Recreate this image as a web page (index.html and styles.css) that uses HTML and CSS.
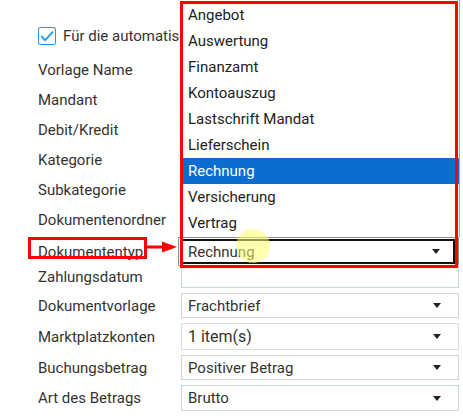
FILE: index.html
```html
<!DOCTYPE html>
<html lang="de">
<head>
<meta charset="utf-8">
<title>Vorlage</title>
<link rel="stylesheet" href="styles.css">
</head>
<body>
<div class="page">
  <div class="form">
    <div class="check-row">
      <span class="checkbox">
        <svg width="18" height="18" viewBox="0 0 18 18"><path d="M3.2 9.2 L7.2 13.2 L15 4.6" fill="none" stroke="#2196f3" stroke-width="1.8"/></svg>
      </span>
      <span class="check-label">Für die automatische Verarbeitung verwenden</span>
    </div>
    <div class="group upper">
      <div class="row"><span class="label">Vorlage Name</span><div class="field"></div></div>
      <div class="row"><span class="label">Mandant</span><div class="field"></div></div>
      <div class="row"><span class="label">Debit/Kredit</span><div class="field"></div></div>
      <div class="row"><span class="label">Kategorie</span><div class="field"></div></div>
      <div class="row"><span class="label">Subkategorie</span><div class="field"></div></div>
      <div class="row"><span class="label">Dokumentenordner</span><div class="field"></div></div>
      <div class="row"><span class="label">Dokumententyp</span>
        <div class="active">
          <div class="active-inner"><span class="value">Rechnung</span><span class="caret"></span></div>
        </div>
      </div>
    </div>
    <div class="group lower">
      <div class="row row-date"><span class="label">Zahlungsdatum</span><div class="field f23"></div></div>
      <div class="row"><span class="label">Dokumentvorlage</span><div class="field f25"><span class="value">Frachtbrief</span><span class="caret"></span></div></div>
      <div class="row"><span class="label">Marktplatzkonten</span><div class="field f27 grey"><span class="value big">1 item(s)</span><span class="caret"></span></div></div>
      <div class="row"><span class="label">Buchungsbetrag</span><div class="field f25"><span class="value">Positiver Betrag</span><span class="caret"></span></div></div>
      <div class="row"><span class="label">Art des Betrags</span><div class="field f26"><span class="value">Brutto</span><span class="caret"></span></div></div>
    </div>
  </div>

  <ul class="listbox">
    <li>Angebot</li>
    <li>Auswertung</li>
    <li>Finanzamt</li>
    <li>Kontoauszug</li>
    <li>Lastschrift Mandat</li>
    <li>Lieferschein</li>
    <li class="selected">Rechnung</li>
    <li>Versicherung</li>
    <li>Vertrag</li>
  </ul>

  <div class="annot-list"></div>
  <div class="annot-label"></div>
  <svg class="annot-arrow" width="32" height="14" viewBox="0 0 32 14"><rect x="0" y="5.5" width="17" height="3" fill="#f00"/><polygon points="15,1.5 30,7 15,12.5" fill="#f00"/></svg>
  <div class="cursor"></div>
</div>
</body>
</html>
```

FILE: styles.css
```css
* { box-sizing: border-box; }
html, body { margin: 0; padding: 0; background: #fff; }
body { font-family: Roboto, "Noto Sans", "Liberation Sans", sans-serif; color: #333; }

.page {
  position: relative;
  width: 463px;
  height: 420px;
  overflow: hidden;
}

.form {
  display: flex;
  flex-direction: column;
  padding: 27px 0 0 38px;
}

.check-row {
  display: flex;
  align-items: center;
  height: 18px;
  margin-bottom: 12px;
  gap: 7px;
  font-size: 15px;
  white-space: nowrap;
}
.checkbox {
  width: 18px;
  height: 18px;
  border: 1.5px solid #2196f3;
  border-radius: 2px;
  display: flex;
  align-items: center;
  justify-content: center;
  flex: none;
}
.checkbox svg { display: block; margin: -1.5px; }

.group { display: flex; flex-direction: column; }
.upper { gap: 4px; }
.lower { gap: 5px; margin-top: 2px; }

.row {
  display: grid;
  grid-template-columns: 143px 278px;
  align-items: center;
  min-height: 26px;
}
.upper .row { height: 26px; }
.lower .row { min-height: 0; }

.label {
  font-size: 15px;
  color: #333;
  white-space: nowrap;
}

.field {
  height: 26px;
  border: 1px solid #c8d6dd;
  background: #fff;
  display: flex;
  align-items: center;
  justify-content: space-between;
  padding: 0 17px 0 6px;
}
.f23 { height: 23px; }
.f25 { height: 25px; }
.f26 { height: 26px; }
.f27 { height: 27px; }
.grey { border-color: #dcdcdc; }

.value { font-size: 15px; color: #333; white-space: nowrap; }
.value.big { font-size: 16px; }

.caret {
  width: 0;
  height: 0;
  border-left: 4.5px solid transparent;
  border-right: 4.5px solid transparent;
  border-top: 5px solid #222;
}

.active {
  height: 29px;
  margin-left: -3px;
  border: 1px solid #8f8f8f;
  padding: 1px 3px 1px 1px;
  background: #fff;
}
.active-inner {
  height: 100%;
  border: 2px solid #111;
  display: flex;
  align-items: center;
  justify-content: space-between;
  padding: 0 13px 0 6px;
}

.listbox {
  position: absolute;
  left: 180px;
  top: 0;
  width: 280px;
  height: 237px;
  margin: 0;
  padding: 2px 0 0 0;
  list-style: none;
  background: #fff;
  border-right: 1px solid #a9a9a9;
}
.listbox li {
  height: 26px;
  line-height: 26px;
  padding-left: 8px;
  font-size: 15px;
  color: #222;
  white-space: nowrap;
}
.listbox li.selected {
  background: #0b6dd0;
  color: #fff;
}

.annot-list {
  position: absolute;
  left: 180px;
  top: 1px;
  width: 278px;
  height: 267px;
  border: 3px solid #f00;
}
.annot-label {
  position: absolute;
  left: 28px;
  top: 237px;
  width: 119px;
  height: 22px;
  border: 3px solid #f00;
}
.annot-arrow {
  position: absolute;
  left: 147px;
  top: 240px;
}
.cursor {
  position: absolute;
  left: 236px;
  top: 229px;
  width: 34px;
  height: 34px;
  border-radius: 50%;
  background: rgba(255, 255, 110, 0.55);
}
```
